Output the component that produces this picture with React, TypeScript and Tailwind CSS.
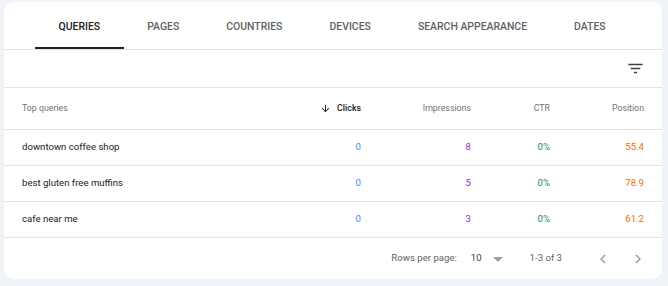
const tabs = ["QUERIES", "PAGES", "COUNTRIES", "DEVICES", "SEARCH APPEARANCE", "DATES"];

const rows = [
  { query: "downtown coffee shop", clicks: "0", impressions: "8", ctr: "0%", position: "55.4" },
  { query: "best gluten free muffins", clicks: "0", impressions: "5", ctr: "0%", position: "78.9" },
  { query: "cafe near me", clicks: "0", impressions: "3", ctr: "0%", position: "61.2" },
];

const cols = "grid grid-cols-[229px_110px_110px_79px_94px] items-center";

function FilterIcon() {
  return (
    <svg width="19" height="19" viewBox="0 0 24 24" fill="#3c4043">
      <path d="M10 18h4v-2h-4v2zM3 6v2h18V6H3zm3 7h12v-2H6v2z" />
    </svg>
  );
}

export default function App() {
  return (
    <div className="w-[668px] h-[286px] bg-[#f0f4f9] pl-[4px] pt-[2px] font-['Roboto',sans-serif]">
      <div className="w-[658px] h-[277px] bg-white rounded-[10px] overflow-hidden flex flex-col">
        {/* tabs */}
        <div className="h-[48px] flex pl-[31px] border-b border-[#e3e3e3] shrink-0">
          {tabs.map((t, i) => (
            <div
              key={t}
              className={`relative h-full flex items-center pt-[2px] px-[23.5px] text-[10.45px] font-medium ${
                i === 0 ? "text-[#202124]" : "text-[#5f6368]"
              }`}
            >
              {t}
              {i === 0 && <div className="absolute left-0 right-0 bottom-0 h-[2px] bg-[#202124]" />}
            </div>
          ))}
        </div>

        {/* filter bar */}
        <div className="h-[38px] flex items-center justify-end pr-[17px] border-b border-[#e3e3e3] shrink-0">
          <FilterIcon />
        </div>

        {/* table header */}
        <div className={`${cols} h-[42px] px-[18px] border-b border-[#e3e3e3] text-[8.8px] text-[#6f7377] shrink-0`}>
          <div>Top queries</div>
          <div className="flex items-center justify-end gap-[6px] text-[#202124] font-medium">
            <svg width="11" height="11" viewBox="0 0 24 24" fill="#202124">
              <path d="M20 12l-1.41-1.41L13 16.17V4h-2v12.17l-5.58-5.59L4 12l8 8 8-8z" />
            </svg>
            Clicks
          </div>
          <div className="text-right">Impressions</div>
          <div className="text-right">CTR</div>
          <div className="text-right">Position</div>
        </div>

        {/* rows */}
        {rows.map((r) => (
          <div
            key={r.query}
            className={`${cols} h-[36px] px-[18px] border-b border-[#e3e3e3] text-[9.6px] shrink-0`}
          >
            <div className="text-[#202124]">{r.query}</div>
            <div className="text-right text-[#4285f4]">{r.clicks}</div>
            <div className="text-right text-[#8430ce]">{r.impressions}</div>
            <div className="text-right text-[#12897b]">{r.ctr}</div>
            <div className="text-right text-[#e8710a]">{r.position}</div>
          </div>
        ))}

        {/* pagination */}
        <div className="flex-1 flex items-center justify-end pr-[15px] text-[9.6px] text-[#5f6368]">
          <span>Rows per page:</span>
          <span className="ml-[14px] text-[#3c4043]">10</span>
          <svg className="ml-[4px]" width="24" height="24" viewBox="0 0 24 24" fill="#9aa0a6">
            <path d="M7 10l5 5 5-5z" />
          </svg>
          <span className="ml-[20px]">1-3 of 3</span>
          <svg className="ml-[32px]" width="18" height="18" viewBox="0 0 24 24" fill="#9aa0a6">
            <path d="M15.41 7.41L14 6l-6 6 6 6 1.41-1.41L10.83 12z" />
          </svg>
          <svg className="ml-[17px]" width="18" height="18" viewBox="0 0 24 24" fill="#9aa0a6">
            <path d="M10 6L8.59 7.41 13.17 12l-4.58 4.59L10 18l6-6z" />
          </svg>
        </div>
      </div>
    </div>
  );
}
